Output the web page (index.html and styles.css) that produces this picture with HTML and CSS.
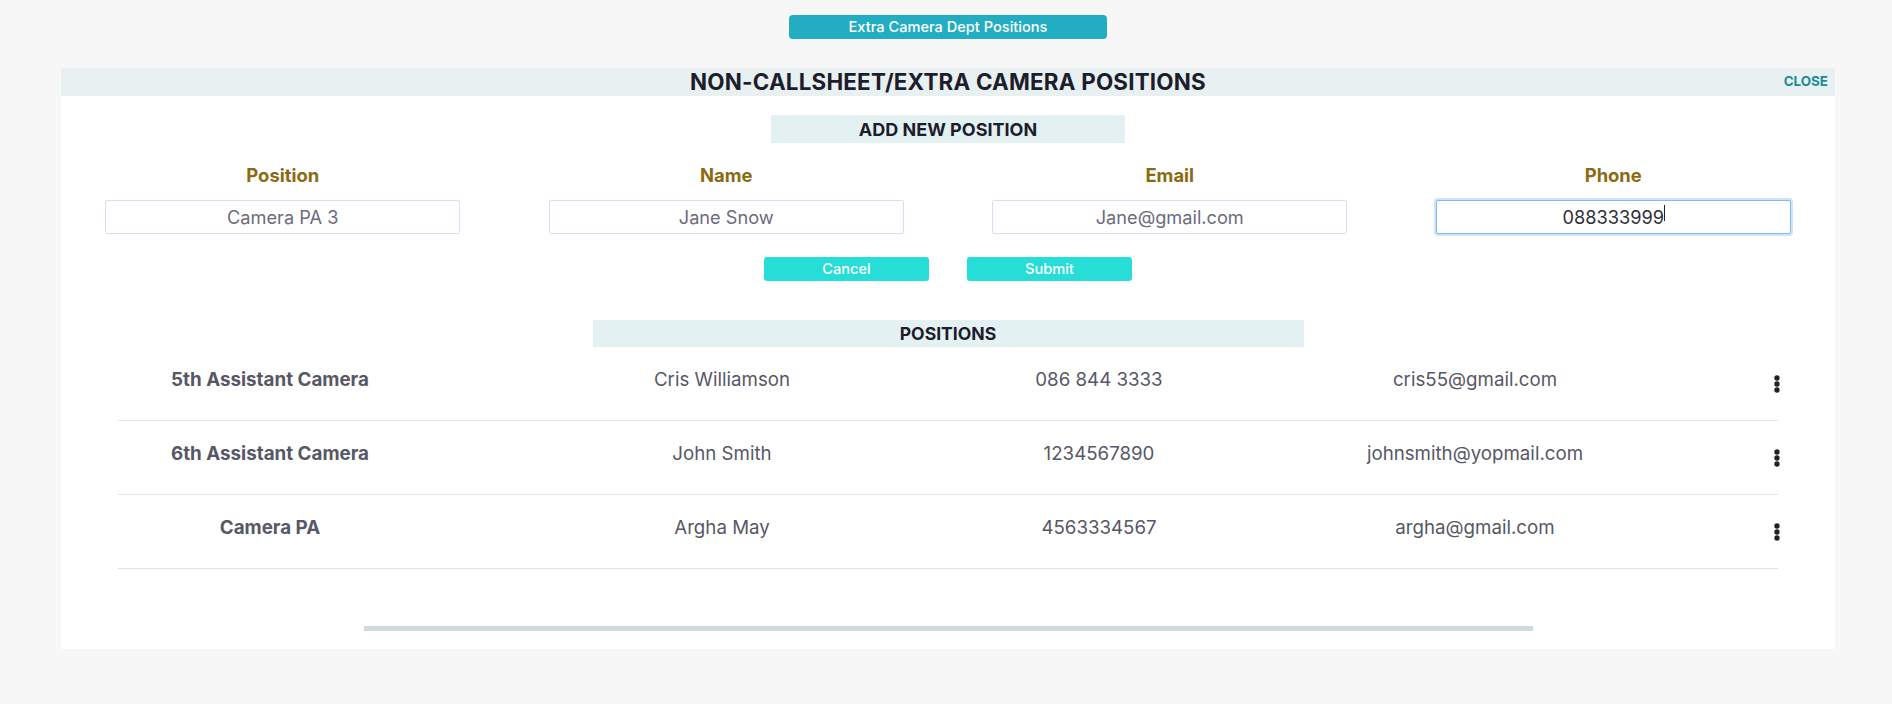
FILE: index.html
```html
<!DOCTYPE html>
<html lang="en">
<head>
<meta charset="utf-8">
<title>Extra Camera Positions</title>
<link rel="stylesheet" href="styles.css">
</head>
<body>
<div class="page">
  <div class="top-bar">
    <button class="dept-btn" type="button">Extra Camera Dept Positions</button>
  </div>

  <section class="modal">
    <header class="modal-head">
      <h1 class="modal-title">NON-CALLSHEET/EXTRA CAMERA POSITIONS</h1>
      <a class="close-link" href="#">CLOSE</a>
    </header>

    <div class="section-label">ADD NEW POSITION</div>

    <form class="form-grid">
      <label class="field">
        <span class="field-label">Position</span>
        <input class="field-input" type="text" value="Camera PA 3">
      </label>
      <label class="field">
        <span class="field-label">Name</span>
        <input class="field-input" type="text" value="Jane Snow">
      </label>
      <label class="field">
        <span class="field-label">Email</span>
        <input class="field-input" type="text" value="Jane@gmail.com">
      </label>
      <label class="field">
        <span class="field-label">Phone</span>
        <span class="input-wrap">
          <input class="field-input is-focused" type="text" value="088333999">
          <span class="caret"></span>
        </span>
      </label>
    </form>

    <div class="actions">
      <button class="action-btn" type="button">Cancel</button>
      <button class="action-btn" type="button">Submit</button>
    </div>

    <div class="section-label positions-label">POSITIONS</div>

    <div class="table">
      <div class="row">
        <div class="cell cell-pos">5th Assistant Camera</div>
        <div class="cell">Cris Williamson</div>
        <div class="cell">086 844 3333</div>
        <div class="cell">cris55@gmail.com</div>
        <div class="cell-menu"><svg class="kebab" viewBox="0 0 6 18" width="6" height="18"><circle cx="3" cy="3" r="2.7"/><circle cx="3" cy="9" r="2.7"/><circle cx="3" cy="15" r="2.7"/></svg></div>
      </div>
      <div class="row">
        <div class="cell cell-pos">6th Assistant Camera</div>
        <div class="cell">John Smith</div>
        <div class="cell">1234567890</div>
        <div class="cell">johnsmith@yopmail.com</div>
        <div class="cell-menu"><svg class="kebab" viewBox="0 0 6 18" width="6" height="18"><circle cx="3" cy="3" r="2.7"/><circle cx="3" cy="9" r="2.7"/><circle cx="3" cy="15" r="2.7"/></svg></div>
      </div>
      <div class="row">
        <div class="cell cell-pos">Camera PA</div>
        <div class="cell">Argha May</div>
        <div class="cell">4563334567</div>
        <div class="cell">argha@gmail.com</div>
        <div class="cell-menu"><svg class="kebab" viewBox="0 0 6 18" width="6" height="18"><circle cx="3" cy="3" r="2.7"/><circle cx="3" cy="9" r="2.7"/><circle cx="3" cy="15" r="2.7"/></svg></div>
      </div>
    </div>

    <div class="scroll-track"></div>
  </section>
</div>
</body>
</html>
```

FILE: styles.css
```css
* { box-sizing: border-box; }

html, body {
  margin: 0;
  padding: 0;
  background: #f7f7f7;
  font-family: "Inter", "DejaVu Sans", sans-serif;
}

.page {
  padding: 15px 57px 0 61px;
}

.top-bar {
  display: flex;
  justify-content: center;
}

.dept-btn {
  width: 318px;
  height: 24px;
  border: none;
  border-radius: 4px;
  background: #23adc2;
  color: #ffffff;
  font-family: inherit;
  font-size: 14.6px;
  font-weight: 500;
  padding: 0;
}

.modal {
  margin-top: 29px;
  background: #ffffff;
  height: 581px;
  display: flex;
  flex-direction: column;
}

.modal-head {
  position: relative;
  height: 28px;
  background: #e8f0f2;
  display: flex;
  align-items: center;
  justify-content: center;
}

.modal-title {
  margin: 0;
  font-size: 22.4px;
  line-height: 28px;
  font-weight: 700;
  color: #1d1d2b;
  letter-spacing: 0.2px;
}

.close-link {
  position: absolute;
  right: 7px;
  top: 5px;
  font-size: 13.4px;
  font-weight: 700;
  color: #1c8b95;
  text-decoration: none;
}

.section-label {
  align-self: center;
  width: 354px;
  height: 28px;
  margin-top: 19px;
  background: #e3f1f2;
  display: flex;
  align-items: center;
  justify-content: center;
  font-size: 18px;
  font-weight: 700;
  color: #1d1d2b;
}

.form-grid {
  margin: 21px 0 0;
  display: grid;
  grid-template-columns: repeat(4, 1fr);
}

.field {
  display: flex;
  flex-direction: column;
  align-items: center;
}

.field-label {
  font-size: 18.4px;
  line-height: 23px;
  font-weight: 700;
  color: #8b6a12;
}

.field-input {
  margin-top: 13px;
  width: 80%;
  height: 34px;
  border: 1px solid #dcdcf4;
  border-radius: 2px;
  background: #fff;
  text-align: center;
  font-family: inherit;
  font-size: 18.2px;
  color: #6b6b7c;
  outline: none;
}

.input-wrap {
  position: relative;
  width: 80%;
  display: flex;
  margin-top: 13px;
}

.input-wrap .field-input {
  width: 100%;
  margin-top: 0;
}

.field-input.is-focused {
  border: 1px solid #86b8f4;
  box-shadow: 0 0 0 2px #cfe3fb;
  color: #2e2e3a;
}

.caret {
  position: absolute;
  left: 228px;
  top: 5px;
  width: 1px;
  height: 16px;
  background: #222;
}

.actions {
  margin-top: 23px;
  display: flex;
  justify-content: center;
  gap: 38px;
}

.action-btn {
  width: 165px;
  height: 24px;
  border: none;
  border-radius: 3px;
  background: #27ddd8;
  color: #ffffff;
  font-family: inherit;
  font-size: 14.6px;
  font-weight: 500;
  padding: 0;
}

.positions-label {
  width: 711px;
  height: 27px;
  margin-top: 39px;
  font-size: 17.6px;
}

.table {
  margin: 0 57px;
}

.row {
  height: 74px;
  display: grid;
  grid-template-columns: 304px 600px 154px 598px 1fr;
  align-items: center;
  border-bottom: 1px solid #e3e3e3;
}

.cell {
  text-align: center;
  font-size: 18.7px;
  color: #575766;
  padding-bottom: 8px;
  white-space: nowrap;
}

.cell-pos {
  font-weight: 700;
  font-size: 18.8px;
}

.cell-menu {
  display: flex;
  justify-content: flex-end;
  margin-right: -2px;
}

.kebab {
  fill: #222;
  display: block;
}

.scroll-track {
  align-self: center;
  width: 1169px;
  height: 5px;
  margin-top: 57px;
  background: #d0dadd;
}
```
